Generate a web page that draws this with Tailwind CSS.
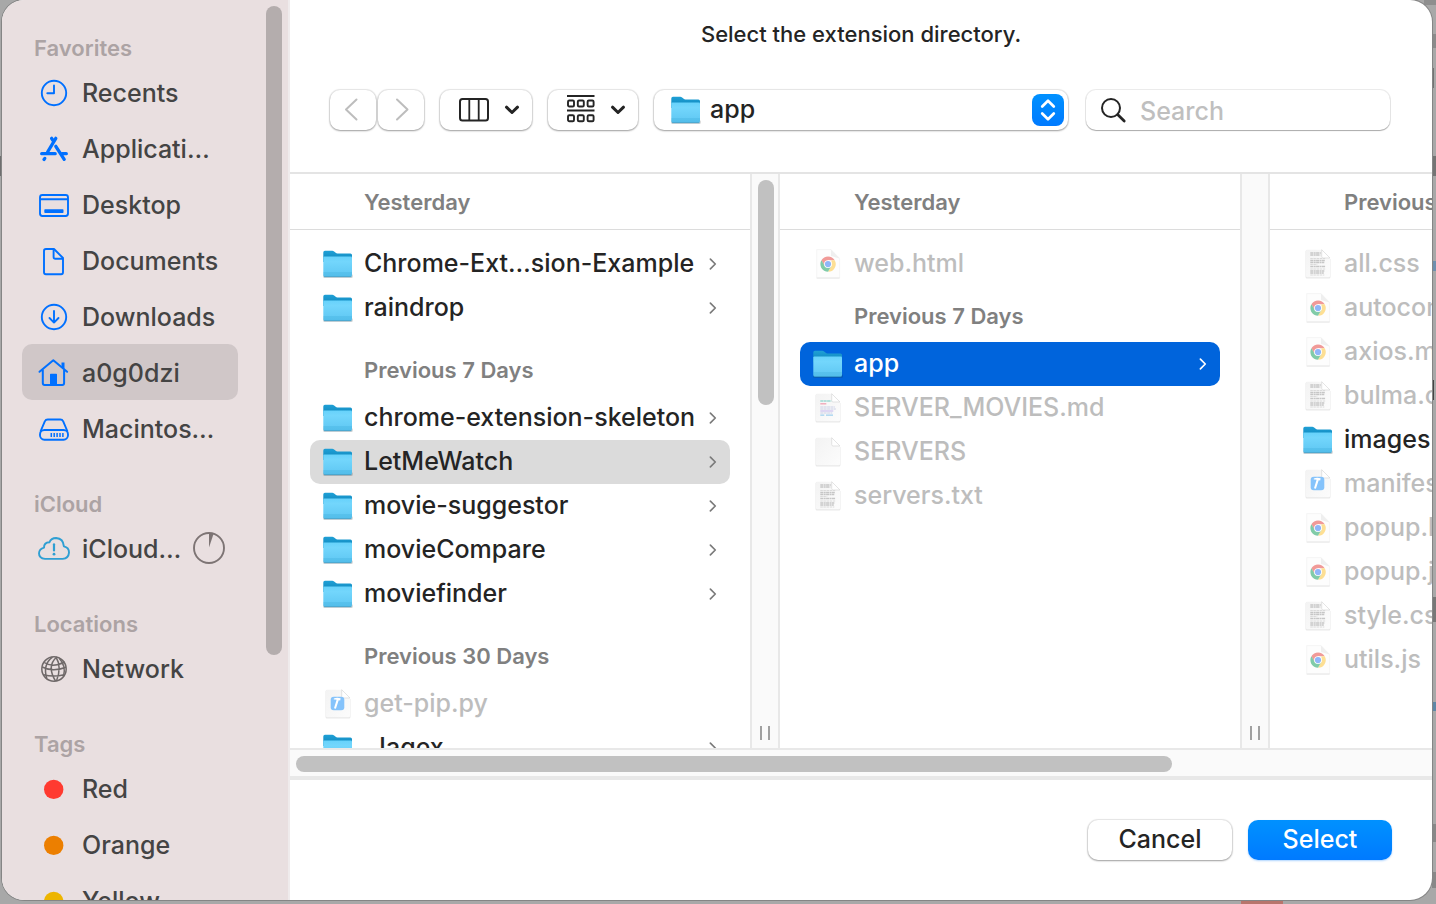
<!DOCTYPE html>
<html lang="en">
<head>
<meta charset="utf-8">
<meta name="viewport" content="width=device-width, initial-scale=1">
<title>Select the extension directory</title>
<script src="https://cdn.jsdelivr.net/npm/@tailwindcss/browser@4"></script>
</head>
<body class="relative h-screen overflow-hidden bg-[#a8a8a8] pr-1 pb-1 pl-0.5 font-['Inter','Liberation_Sans',sans-serif] text-[25px] font-[450] text-[#242424]">

<!-- Icon library -->
<svg class="absolute size-0" aria-hidden="true">
  <defs>
    <linearGradient id="folder-front" x1="0" y1="0" x2="0" y2="1"><stop offset="0" stop-color="#67d2fb"/><stop offset=".25" stop-color="#73d6fc"/><stop offset="1" stop-color="#5dc6f2"/></linearGradient>
    <linearGradient id="folder-back" x1="0" y1="0" x2="0" y2="1"><stop offset="0" stop-color="#1fa0d6"/><stop offset="1" stop-color="#0f83b8"/></linearGradient>
    <linearGradient id="paper" x1="0" y1="0" x2="1" y2="1"><stop offset="0" stop-color="#f3f3f3"/><stop offset="1" stop-color="#fcfcfc"/></linearGradient>
  </defs>
  <symbol id="folder" viewBox="0 0 32 32">
    <rect x="1.200" y="26" width="29.600" height="4" rx="1.500" fill="#000" opacity=".16"/>
    <path d="M1.300 4.400q0-1.600 1.600-1.600h7.400q1 0 1.800.7l1.600 1.300q.7.6 1.700.6H28.400q1.600 0 1.600 1.600V14H1.300Z" fill="url(#folder-back)"/>
    <path d="M1.300 9.600q0-1 1-1H29q1 0 1 1V27q0 1.800-1.800 1.800H3.100q-1.800 0-1.800-1.800Z" fill="url(#folder-front)"/>
    <path d="M1.300 25h28.700M1.300 27h28.700" stroke="#2fa2d4" stroke-width=".6" opacity=".7"/>
    <path d="M1.800 28.700h27.700" stroke="#3497c2" stroke-width=".8"/>
  </symbol>
  <symbol id="blank" viewBox="0 0 32 32">
    <path d="M3.500 3.500q0-1.500 1.500-1.500H19l9.500 9.500V29q0 1.500-1.500 1.500H5q-1.500 0-1.500-1.500Z" fill="#000" opacity=".09"/>
    <path d="M4 3q0-1.300 1.300-1.300H19.700L28 10V28q0 1.300-1.300 1.300H5.300Q4 29.300 4 28Z" fill="url(#paper)"/>
    <path d="M19.700 1.700V8.500q0 1.500 1.500 1.500H28Z" fill="#fff" stroke="#d9d9d9" stroke-width=".7"/>
  </symbol>
  <symbol id="text" viewBox="0 0 32 32">
    <use href="#blank"/>
    <path d="M8.300 5h10.500M8.300 7h10M8.300 12.500h14.500M8.300 14.500h14M8.300 18.500h15M8.300 23h14M8.300 25h13.500" stroke="#c6c6c6" stroke-width="1.400" stroke-dasharray="3.200 .5 1.700 .4"/>
    <path d="M8.300 10.500h15M8.300 16.500h7M8.300 21h15M8.300 27h14" stroke="#dadada" stroke-width="1" stroke-dasharray="2.500 .6"/>
  </symbol>
  <symbol id="markdown" viewBox="0 0 32 32">
    <use href="#blank"/>
    <path d="M8.300 9h11" stroke="#9fd9d3" stroke-width="1.500" stroke-dasharray="3 .4"/>
    <path d="M8.300 11.800h6" stroke="#f0a3b4" stroke-width="1.300"/>
    <path d="M8.300 15h14.500M8.300 17h15.500M8.300 21h12" stroke="#cbd0e6" stroke-width="1.200" stroke-dasharray="3 .4"/>
    <path d="M8.300 19h13" stroke="#c4b5ee" stroke-width="1"/><path d="M8.300 23.200h4M14 23.200h7" stroke="#9fd0ee" stroke-width="1.200"/>
  </symbol>
  <symbol id="code" viewBox="0 0 32 32">
    <use href="#blank"/>
    <rect x="8.700" y="8.700" width="13.600" height="13.600" rx="3" fill="#85c3fb"/>
    <path d="M11.800 10.600q3-1.700 6.800-.3l-.4 2.200-1.500-.3-2.800 8.600-1.900-.5 2.600-8.600q-1.300-.5-2.800-.2Z" fill="#fff"/>
  </symbol>
  <symbol id="chrome" viewBox="0 0 32 32">
    <path d="M4.700 1.600H19l8.600 8.800V30H4.700Z" fill="#fdfdfd" stroke="#f1f1f1" stroke-width=".8"/>
    <path d="M19 1.600V8l8.600 2.400Z" fill="#efefef"/>
    <path d="M4.700 30h22.900" stroke="#e2e2e2" stroke-width=".8"/>
    <path d="M9.400 12.250A7.700 7.700 0 0 1 22.700 12.250H16L12.600 18Z" fill="#f19a98"/>
    <path d="M22.700 12.250A7.700 7.700 0 0 1 16 23.800l3.400-5.900V12.250Z" fill="#fddf94"/>
    <path d="M9.400 12.250A7.700 7.700 0 0 0 16 23.800l3.400-5.900-6.700-.1Z" fill="#80cba8"/>
    <circle cx="16" cy="16.100" r="3.900" fill="#fff"/><circle cx="16" cy="16.100" r="3.100" fill="#8fb6f9"/>
  </symbol>
  <symbol id="chevron" viewBox="0 0 10 16"><path d="M2 2.500 7.600 8 2 13.500" fill="none" stroke="currentColor" stroke-width="1.900" stroke-linecap="round" stroke-linejoin="round"/></symbol>
  <symbol id="caret" viewBox="0 0 16 10"><path d="M2.500 2.200 8 7.500l5.500-5.300" fill="none" stroke="currentColor" stroke-width="3" stroke-linecap="round" stroke-linejoin="round"/></symbol>

  <symbol id="clock" viewBox="0 0 32 32"><g fill="none" stroke="currentColor" stroke-width="1.900" stroke-linecap="round" stroke-linejoin="round"><circle cx="16" cy="17" r="12.200"/><path d="M16 9.500V17.300H9.300"/></g></symbol>
  <symbol id="apps" viewBox="0 0 32 32"><g fill="none" stroke="currentColor" stroke-width="3.300" stroke-linecap="round"><path d="M13.600 6.300 14.900 8.500M17.800 6.300 9.600 20M3.700 21.700H17.200M24.300 21.700h4M17.800 14.300 26.200 27.300M6.800 26.400 6 27.500"/></g></symbol>
  <symbol id="desktop" viewBox="0 0 32 32"><g fill="none" stroke="currentColor" stroke-width="1.900"><rect x="2" y="7" width="28" height="21" rx="2.400"/><path d="M2 11.300H30"/></g><rect x="6.300" y="21.200" width="19.200" height="3.800" rx=".7" fill="currentColor"/></symbol>
  <symbol id="document" viewBox="0 0 32 32"><g fill="none" stroke="currentColor" stroke-width="1.900" stroke-linejoin="round"><path d="M8 5H16L25 14V28.300q0 1.900-1.900 1.900H7.900Q6 30.200 6 28.300V6.900Q6 5 8 5Z"/><path d="M15.600 5v8q0 1.800 1.800 1.800H25"/></g></symbol>
  <symbol id="download" viewBox="0 0 32 32"><g fill="none" stroke="currentColor" stroke-width="1.900" stroke-linecap="round" stroke-linejoin="round"><circle cx="16" cy="17" r="12.200"/><path d="M16 11V22.500M11.500 18 16 22.600 20.500 18"/></g></symbol>
  <symbol id="home" viewBox="0 0 32 32"><g fill="none" stroke="currentColor" stroke-width="2" stroke-linecap="round" stroke-linejoin="round"><path d="M1.500 15.800 15.300 4.200 29.100 15.800M4.800 14V27q0 1.900 1.900 1.900H24.200q1.900 0 1.900-1.900V14"/></g><path d="M12 28V18.500q0-.7.700-.7h5.600q.7 0 .7.700V28ZM23.500 6.500h3V13l-3-2.400Z" fill="currentColor"/></symbol>
  <symbol id="drive" viewBox="0 0 32 32"><g fill="none" stroke="currentColor" stroke-width="1.900" stroke-linejoin="round"><path d="M2.500 19.500 6.800 9.300Q7.700 7.500 9.700 7.500H22.300q2 0 2.900 1.800L29.500 19.500"/><rect x="2" y="18" width="28" height="9.700" rx="4.400"/></g><path d="M13.300 21v4M16.200 21v4M19.100 21v4M22 21v4M24.900 21v4" stroke="currentColor" stroke-width="1.500"/></symbol>
  <symbol id="cloud" viewBox="0 0 32 32"><g fill="none" stroke="currentColor" stroke-width="1.900" stroke-linecap="round" stroke-linejoin="round"><path d="M7 26.900Q1 26.300 1 21.300 1.300 16.900 6 15.700 5.900 10.600 11.400 10.300q1.700-4.200 6.700-4.300 7.200.5 7.800 8.400 5.100 1 5.100 6.200-.5 5.800-6.300 6.300Z"/><path d="M16 12.300v6.200" stroke-width="2.200"/></g><circle cx="16" cy="22.200" r="1.400" fill="currentColor"/></symbol>
  <symbol id="globe" viewBox="0 0 32 32"><g fill="none" stroke="currentColor" stroke-width="1.500"><circle cx="16" cy="17" r="12.200"/><path d="M18.500 5.200Q8.500 14 17.500 29M18 5Q24 15 18.500 29M14.500 5.200Q4.500 12.500 8.800 26.500M21 6q7.500 8 4.500 18.500M6.200 10.500q8 5.500 20.500-.5M4.200 15q10.500 5.500 23.800.3M5.500 22.800q10 2.600 20.700 0"/></g></symbol>
  <symbol id="dot" viewBox="0 0 32 32"><circle cx="15.700" cy="17.400" r="9.700" fill="currentColor"/></symbol>
</svg>

<!-- Dimmed page behind the sheet -->
<svg class="absolute inset-0 h-full w-full" aria-hidden="true">
  <g fill="#6f6f6f"><rect x="0" y="156" width="3" height="20"/><rect x="1424" width="12" height="5" fill="#8e8e8e"/></g>
  <svg x="100%" overflow="visible"><g fill="#747474"><rect x="-4" y="34" width="4" height="14" fill="#8b8b8b"/><rect x="-4" y="68" width="2" height="20"/><rect x="-4" y="156" width="4" height="20"/><rect x="-4" y="380" width="2" height="20" fill="#444"/><rect x="-4" y="597" width="4" height="25" fill="#777"/><rect x="-4" y="261" width="4" height="10" fill="#6f8fae"/><rect x="-4" y="702" width="4" height="9" fill="#5f87a6"/><rect x="-4" y="824" width="4" height="18" fill="#888"/><rect x="-4" y="872" width="4" height="16" fill="#888"/></g></svg>
  <rect x="1241" y="900" width="42" height="4" fill="#b8756c"/>
</svg>

<main class="relative flex h-full overflow-hidden rounded-[22px] bg-white shadow-[0_0_0_1px_#858585]">

  <nav aria-label="Locations" class="relative w-72 shrink-0 overflow-hidden border-r-2 border-[#efebec] bg-[#e9dfe0] pt-8 pl-5 text-[#444]">
    <div id="sidebar" class="flex w-54 flex-col gap-8"></div>
    <div class="absolute top-1.5 right-1.5 h-[649px] w-4 rounded-full bg-[#b4adad]"></div>
  </nav>

  <section class="flex min-w-0 flex-1 flex-col">
    <h1 class="pt-5 text-center text-[22px] leading-7">Select the extension directory.</h1>

    <div class="flex gap-4 py-[42px] pr-[42px] pl-10">
      <div class="flex gap-0.5">
        <button aria-label="Back" class="flex h-10 w-[46px] items-center justify-center rounded-[10px] text-[#bdbdbd] shadow-[0_0_1px_1px_#00000018,0_1px_2px_#00000050]">
          <svg class="h-6 w-5" viewBox="0 0 20 24"><path d="M13.500 1.500 3 11.500 13.500 21.500" fill="none" stroke="currentColor" stroke-width="2" stroke-linecap="round" stroke-linejoin="round"/></svg>
        </button>
        <button aria-label="Forward" class="flex h-10 w-[46px] items-center justify-center rounded-[10px] text-[#bdbdbd] shadow-[0_0_1px_1px_#00000018,0_1px_2px_#00000050]">
          <svg class="h-6 w-5" viewBox="0 0 20 24"><path d="M6 1.500 16.500 11.500 6 21.500" fill="none" stroke="currentColor" stroke-width="2" stroke-linecap="round" stroke-linejoin="round"/></svg>
        </button>
      </div>
      <button aria-label="View as columns" aria-haspopup="menu" class="flex h-10 w-[92px] items-center justify-between rounded-[10px] pr-3 pl-[18px] shadow-[0_0_1px_1px_#00000018,0_1px_2px_#00000050]">
        <svg class="h-8 w-8" viewBox="0 0 32 32" fill="none" stroke="currentColor"><rect x="2" y="5" width="28" height="21.500" rx="2.500" stroke-width="2"/><path d="M11.300 5v21.500M20.700 5v21.500" stroke-width="1.800"/></svg>
        <svg class="h-2.5 w-4"><use href="#caret"/></svg>
      </button>
      <button aria-label="Group items" aria-haspopup="menu" class="flex h-10 w-[90px] items-center justify-between rounded-[10px] pr-3 pl-[17px] shadow-[0_0_1px_1px_#00000018,0_1px_2px_#00000050]">
        <svg class="h-8 w-8" viewBox="0 0 32 32" fill="none" stroke="currentColor" stroke-width="1.900"><path d="M2 2h27.500M2 16.500h27.500"/><rect x="3" y="6.500" width="6" height="6" rx="1.300"/><rect x="12.800" y="6.500" width="6" height="6" rx="1.300"/><rect x="22.600" y="6.500" width="6" height="6" rx="1.300"/><rect x="3" y="21.300" width="6" height="6" rx="1.300"/><rect x="12.800" y="21.300" width="6" height="6" rx="1.300"/><rect x="22.600" y="21.300" width="6" height="6" rx="1.300"/></svg>
        <svg class="h-2.5 w-4"><use href="#caret"/></svg>
      </button>
      <label class="relative flex h-10 min-w-0 flex-1 items-center gap-2 rounded-[10px] pr-1 pl-4 shadow-[0_0_1px_1px_#00000018,0_1px_2px_#00000050]">
        <svg class="h-8 w-8 shrink-0"><use href="#folder"/></svg>
        <select aria-label="Current folder" class="h-10 min-w-0 flex-1 appearance-none bg-transparent outline-none"><option>app</option></select>
        <span class="flex h-8 w-8 shrink-0 items-center justify-center rounded-lg bg-linear-to-b from-[#0091ff] to-[#007aff] text-white">
          <svg class="h-6 w-4" viewBox="0 0 16 24"><path d="M2.200 8.500 8 2.800l5.800 5.700M2.200 15.500 8 21.200l5.800-5.700" fill="none" stroke="currentColor" stroke-width="2.700" stroke-linecap="round" stroke-linejoin="round"/></svg>
        </span>
      </label>
      <label class="ml-0.5 flex h-10 w-[304px] shrink-0 items-center gap-3 rounded-[10px] pl-3.5 shadow-[0_0_0_1px_#00000014,0_1px_1px_#00000045]">
        <svg class="h-7 w-7 shrink-0" viewBox="0 0 28 28" fill="none" stroke="currentColor" stroke-linecap="round"><circle cx="11" cy="12" r="9" stroke-width="2"/><path d="M17.600 18.600 24.200 25" stroke-width="2.800"/></svg>
        <input type="search" aria-label="Search" placeholder="Search" class="h-10 min-w-0 flex-1 bg-transparent pt-0.5 outline-none placeholder:text-[#bfbfbf]">
      </label>
    </div>

    <div id="browser" class="flex min-h-0 flex-1 overflow-hidden border-t-2 border-[#e4e4e4]"></div>

    <div class="h-8 shrink-0 border-t-2 border-b-4 border-[#e8e8e8] bg-[#fafafa] px-1.5 pt-1.5">
      <div class="h-4 w-[77.5%] rounded-full bg-[#c1c1c1]"></div>
    </div>

    <div class="flex justify-end gap-4 px-10 py-10">
      <button class="h-10 w-36 rounded-[10px] shadow-[0_0_1px_1px_#00000018,0_1px_2px_#00000050]">Cancel</button>
      <button class="h-10 w-36 rounded-[10px] bg-linear-to-b from-[#0091ff] to-[#007aff] text-white shadow-[0_1px_2px_#007aff50]">Select</button>
    </div>
  </section>
</main>

<script>
const groups = [
  ['Favorites', [['clock','Recents'],['apps','Applicati…'],['desktop','Desktop'],['document','Documents'],['download','Downloads'],['home','a0g0dzi'],['drive','Macintos…']]],
  ['iCloud', [['cloud','iCloud…','text-[#2f9fd3]']]],
  ['Locations', [['globe','Network','text-[#6f6969]']]],
  ['Tags', [['dot','Red','text-[#ff3a30]'],['dot','Orange','text-[#ec7f00]'],['dot','Yellow','text-[#edb500]']]],
];
const progress = '<svg class="h-8 w-8 shrink-0 text-[#7d7474]" viewBox="2 2 32 32"><circle cx="18" cy="18" r="15" fill="none" stroke="currentColor" stroke-width="1.900"/><path d="M18 17.500V3l4.600.8Z" fill="currentColor"/></svg>';
document.getElementById('sidebar').innerHTML = groups.map(([title, items]) => `
  <div>
    <h2 class="flex h-8 items-center pl-3 text-[22px] font-semibold text-[#aca3a4]">${title}</h2>
    <ul>${items.map(([icon, label, tint]) => `
      <li><a href="#" class="flex h-14 items-center gap-3 rounded-[10px] pl-4 ${icon === 'home' ? 'bg-[#d0c7c8]' : ''}">
        <svg class="h-8 w-8 shrink-0 ${tint || 'text-[#0070ff]'}"><use href="#${icon}"/></svg>
        <span class="pt-1">${label}</span>${icon === 'cloud' ? progress : ''}
      </a></li>`).join('')}</ul>
  </div>`).join('');

const columns = [
  { title: 'Yesterday', space: 'mt-3.5', thumb: true, rows: [
    ['folder','Chrome-Ext…sion-Example'],['folder','raindrop'],['','Previous 7 Days'],
    ['folder','chrome-extension-skeleton'],['folder','LetMeWatch','bg-[#dbdbdb]'],['folder','movie-suggestor'],
    ['folder','movieCompare'],['folder','moviefinder'],['','Previous 30 Days'],['code','get-pip.py'],['folder','.Jagex']] },
  { title: 'Yesterday', space: 'mt-1', rows: [
    ['chrome','web.html'],['','Previous 7 Days'],['folder','app','bg-[#0064dc] text-white'],
    ['markdown','SERVER_MOVIES.md'],['blank','SERVERS'],['text','servers.txt']] },
  { title: 'Previous 7 Days', space: 'mt-1', rows: [
    ['text','all.css'],['chrome','autocomplete.js'],['chrome','axios.min.js'],['text','bulma.css'],['folder','images'],
    ['code','manifest.json'],['chrome','popup.html'],['chrome','popup.js'],['text','style.css'],['chrome','utils.js']] },
];
const row = (space) => ([icon, label, look]) => !icon
  ? `<li class="${space} flex h-[52px] items-center pl-[54px] text-[22px] font-semibold text-[#808080]">${label}</li>`
  : `<li><button class="flex h-11 w-full items-center gap-2.5 rounded-[10px] pr-3 pl-3 text-left whitespace-nowrap ${look || (icon === 'folder' ? '' : 'text-[#bdbdbd]')}">
      <svg class="h-8 w-8 shrink-0"><use href="#${icon}"/></svg>
      <span class="min-w-0 flex-1">${label}</span>
      ${icon === 'folder' ? `<svg class="h-3.5 w-2.5 shrink-0 ${label === 'app' ? 'text-white' : 'text-[#7a7a7a]'}"><use href="#chevron"/></svg>` : ''}
    </button></li>`;
document.getElementById('browser').innerHTML = columns.map(c => `
  <div class="w-[460px] shrink-0 overflow-hidden">
    <h2 class="flex h-14 items-center border-b border-[#dcdcdc] pt-0.5 pl-[74px] text-[22px] font-semibold text-[#808080]">${c.title}</h2>
    <ul class="px-5 pt-3">${c.rows.map(row(c.space)).join('')}</ul>
  </div>
  <div class="flex w-[30px] shrink-0 flex-col items-center justify-between border-x-2 border-[#e8e8e8] bg-[#fafafa] pt-1.5 pb-2">
    <div class="ml-0.5 h-[225px] w-4 rounded-full ${c.thumb ? 'bg-[#c1c1c1]' : ''}"></div>
    <div class="h-3.5 w-2.5 border-x-2 border-[#a0a0a0]"></div>
  </div>`).join('');
</script>
</body>
</html>
